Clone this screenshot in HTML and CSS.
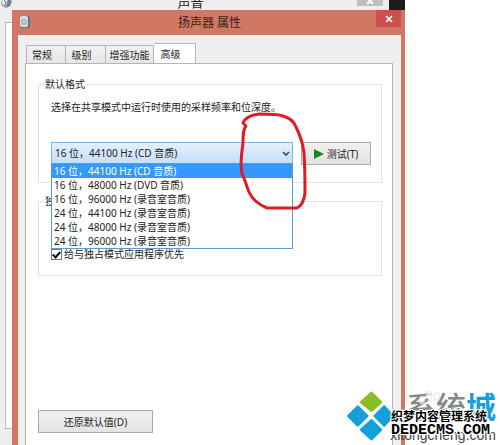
FILE: index.html
```html
<!DOCTYPE html>
<html lang="zh-CN">
<head>
    <meta charset="UTF-8">
    <meta name="viewport" content="width=device-width, initial-scale=1.0">
    <title>扬声器 属性</title>
    <link rel="stylesheet" href="styles.css">
</head>
<body>
    <div class="desktop">
        <div class="parent-window">
            <svg class="parent-icon" viewBox="0 0 14 14" aria-hidden="true">
                <circle cx="6" cy="5" r="5" fill="#a9b1b8"/>
                <circle cx="5" cy="4" r="3" fill="#dce3e8"/>
                <path d="M8 1l4 2-2 5-4 1z" fill="#6f7f8c"/>
                <path d="M3 1l3 3-1 3" fill="none" stroke="#75808a"/>
            </svg>
            <span class="parent-title">声音</span>
            <button class="parent-close" type="button" aria-label="关闭声音">
                <svg viewBox="0 0 8 8"><path d="M1 1l6 6M7 1l-6 6" stroke="#fff" stroke-width="2"/></svg>
            </button>
            <div class="parent-page"></div>
        </div>

        <form class="dialog">
            <header class="title-bar">
                <svg class="dialog-icon" viewBox="0 0 12 12" aria-hidden="true">
                    <rect x="1" y="0" width="10" height="12" rx="2" fill="#617481"/>
                    <rect x="1" y="0" width="8" height="11" rx="2" fill="#d3dde4"/>
                    <circle cx="5" cy="6" r="3" fill="#a3b6c4"/>
                    <circle cx="5" cy="6" r="1" fill="#dfeaf1"/>
                </svg>
                <h1>扬声器 属性</h1>
                <button class="close" type="button" aria-label="关闭">
                    <svg viewBox="0 0 8 8"><path d="M1 1l6 6M7 1l-6 6" stroke="#fff" stroke-width="1.6"/></svg>
                </button>
            </header>

            <div class="client">
                <nav class="tabs" role="tablist">
                    <button type="button" role="tab">常规</button>
                    <button type="button" role="tab">级别</button>
                    <button type="button" role="tab" class="wide">增强功能</button>
                    <button type="button" role="tab" class="active" aria-selected="true">高级</button>
                </nav>
                <div class="page">
                    <fieldset class="format">
                        <legend>默认格式</legend>
                        <label for="format">选择在共享模式中运行时使用的采样频率和位深度。</label>
                        <div class="format-row">
                            <div class="combo">
                                <select id="format">
                                    <option>16 位，44100 Hz (CD 音质)</option>
                                    <option>16 位，48000 Hz (DVD 音质)</option>
                                    <option>16 位，96000 Hz (录音室音质)</option>
                                    <option>24 位，44100 Hz (录音室音质)</option>
                                    <option>24 位，48000 Hz (录音室音质)</option>
                                    <option>24 位，96000 Hz (录音室音质)</option>
                                </select>
                                <svg class="arrow" viewBox="0 0 8 6" aria-hidden="true"><path d="M1 1l3 3 3-3" fill="none" stroke="#444" stroke-width="1.6"/></svg>
                                <ul class="options" role="listbox">
                                    <li role="option" aria-selected="true">16 位，44100 Hz (CD 音质)</li>
                                    <li role="option">16 位，48000 Hz (DVD 音质)</li>
                                    <li role="option">16 位，96000 Hz (录音室音质)</li>
                                    <li role="option">24 位，44100 Hz (录音室音质)</li>
                                    <li role="option">24 位，48000 Hz (录音室音质)</li>
                                    <li role="option">24 位，96000 Hz (录音室音质)</li>
                                </ul>
                                <svg class="scribble" viewBox="0 0 66 100" aria-hidden="true">
                                    <path d="M6 14L3 11C5 6 11 3 19 2C29 2 38 2 43 4C50 6 54 9 56 15C60 23 63 32 64 41C65 55 65 70 65 81C64 89 61 94 57 96L27 96C20 93 12 87 9 80C6 73 5 67 2 62C0 53 1 44 3 31C3 23 3 17 6 14"/>
                                </svg>
                            </div>
                            <button class="push" type="button">
                                <svg class="play" viewBox="0 0 10 10" aria-hidden="true"><path d="M0 0l10 5-10 5z" fill="#158a1d"/></svg>
                                测试(T)
                            </button>
                        </div>
                    </fieldset>

                    <fieldset class="exclusive">
                        <legend>独占模式</legend>
                        <div class="check">
                            <input type="checkbox" id="priority" checked>
                            <label for="priority">给与独占模式应用程序优先</label>
                        </div>
                    </fieldset>

                    <button class="push restore" type="button">还原默认值(D)</button>
                </div>
            </div>
        </form>

        <div class="watermark">
            <svg class="logo" viewBox="0 0 48 50" aria-hidden="true">
                <g stroke-linejoin="round" stroke-width="2">
                    <path d="M25 1L35 11 25 20 14 11z" fill="#85bf24" stroke="#85bf24"/>
                    <path d="M11 15L21 25 11 35 1 25z" fill="#13a0db" stroke="#13a0db"/>
                    <path d="M38 15L47 25 38 35 28 25z" fill="#13a0db" stroke="#13a0db"/>
                    <path d="M25 29L35 39 25 49 14 39z" fill="#13a0db" stroke="#13a0db"/>
                </g>
            </svg>
            <span class="brand">系统<b>城</b></span>
            <svg class="paw" viewBox="0 0 30 28" aria-hidden="true">
                <g fill="#fff" stroke="#ddd" opacity="0.7">
                    <ellipse cx="5" cy="10" rx="3" ry="4"/>
                    <ellipse cx="12" cy="5" rx="3" ry="4"/>
                    <ellipse cx="20" cy="6" rx="3" ry="4"/>
                </g>
            </svg>
            <span class="site">xitongcheng.com</span>
            <span class="cms">织梦内容管理系统</span>
            <span class="cms-site">DEDECMS.COM</span>
        </div>
    </div>
</body>
</html>
```
FILE: styles.css
```css
* {
    box-sizing: border-box;
}
body {
    margin: 0;
    background-color: #fff;
    color: #222;
    font: 10px/14px "Noto Sans", "Noto Sans CJK SC", sans-serif;
}
button,
select {
    font: inherit;
    color: inherit;
    padding: 0;
    margin: 0;
}
svg {
    display: block;
}

/* windows */
.desktop {
    position: relative;
    display: flex;
    min-height: 100vh;
    overflow: hidden;
}
.parent-window {
    position: absolute;
    inset: 0 95px 0 0;
    background: #eee;
    border-right: 16px solid #1d1b1c;
}
.parent-icon {
    position: absolute;
    left: 0;
    top: -2px;
    width: 14px;
    height: 14px;
}
.parent-title {
    position: absolute;
    top: -6px;
    left: 0;
    right: 8px;
    text-align: center;
    font-size: 13px;
    line-height: 16px;
}
.parent-close {
    position: absolute;
    top: -8px;
    right: 6px;
    width: 26px;
    height: 14px;
    border: 0;
    background: #bfbfbf;
}
.parent-close svg {
    width: 8px;
    height: 8px;
    margin: 4px auto 0;
}
.parent-page {
    position: absolute;
    inset: 22px 0 16px 5px;
    background: #fff;
    border: 1px solid #bbb;
}
.dialog {
    position: relative;
    flex: 1;
    display: flex;
    flex-direction: column;
    margin: 10px 95px 0 12px;
    padding: 0 4px 0 6px;
    background: #d07864;
}
.title-bar {
    display: flex;
    height: 25px;
}
.dialog-icon {
    width: 12px;
    height: 12px;
    margin: 6px 0 0 1px;
}
h1 {
    flex: 1;
    margin: 0;
    padding-left: 12px;
    text-align: center;
    font-size: 12px;
    line-height: 25px;
    font-weight: normal;
    color: #3a211c;
}
.close {
    width: 25px;
    height: 17px;
    border: 0;
    background: #c9504f;
}
.close svg {
    width: 8px;
    height: 8px;
    margin: 0 auto;
}
.client {
    flex: 1;
    display: flex;
    flex-direction: column;
    padding: 7px 8px 0 7px;
    background: #efefef;
    border-top: 1px solid #f8e4de;
}

/* tabs */
.tabs {
    display: flex;
    align-items: flex-end;
    padding-left: 1px;
}
.tabs button {
    width: 40px;
    height: 18px;
    padding-right: 8px;
    border: 1px solid #b5b5b5;
    border-width: 1px 1px 0 0;
    background: linear-gradient(#f2f2f2, #e6e6e6);
}
.tabs button:first-child {
    border-left-width: 1px;
}
.tabs .wide {
    width: 48px;
    padding: 0;
}
.tabs .active {
    width: 42px;
    height: 21px;
    margin-bottom: -1px;
    background: #fff;
}
.page {
    flex: 1;
    padding: 13px 10px 12px 12px;
    background: #fff;
    border: 1px solid #b5b5b5;
    border-bottom: 0;
}

/* groups */
fieldset {
    min-width: 0;
    margin: 0;
    padding: 0 10px 0 12px;
    border: 1px solid #e2e2e2;
}
legend {
    margin-left: -7px;
    padding: 0 1px;
}
.format {
    height: 106px;
}
.format label {
    display: block;
    margin-top: 9px;
}
.format-row {
    display: flex;
    gap: 8px;
    margin-top: 28px;
}
.combo {
    position: relative;
    flex: 1;
}
.combo select {
    display: block;
    width: 100%;
    height: 22px;
    padding: 0 3px;
    appearance: none;
    border: 1px solid #7eb4e2;
    border-radius: 0;
    background: linear-gradient(#e4f0fc, #c4dff8);
}
.arrow {
    position: absolute;
    top: 9px;
    right: 3px;
    width: 8px;
    height: 6px;
}
.options {
    position: absolute;
    top: 21px;
    left: 0;
    right: 0;
    margin: 0;
    padding: 0;
    list-style: none;
    background: #fff;
    border: 1px solid #5b9bd5;
}
.options li {
    padding-left: 2px;
    line-height: 14px;
}
.options [aria-selected="true"] {
    color: #fff;
    background: #3399ff;
}
.scribble {
    position: absolute;
    top: -30px;
    right: -13px;
    width: 66px;
    height: 100px;
    overflow: visible;
}
.scribble path {
    fill: none;
    stroke: #e01b24;
    stroke-width: 3;
    stroke-linecap: round;
    stroke-linejoin: round;
}
.push {
    display: flex;
    align-items: center;
    justify-content: center;
    gap: 3px;
    width: 70px;
    height: 23px;
    border: 1px solid #aaa;
    background: linear-gradient(#f0f0f0, #e4e4e4);
}
.play {
    width: 10px;
    height: 10px;
}
.exclusive {
    height: 82px;
    margin-top: 11px;
}
.check {
    display: flex;
    align-items: center;
    gap: 2px;
    margin-top: 39px;
}
.check input {
    appearance: none;
    width: 11px;
    height: 11px;
    margin: 0;
    border: 1px solid #777;
    background: #fff;
}
.check input:checked::before {
    content: "";
    display: block;
    width: 3px;
    height: 6px;
    margin: 0 auto;
    border: solid #111;
    border-width: 0 2px 2px 0;
    transform: rotate(42deg);
}
.restore {
    width: 115px;
    margin-top: 134px;
}

/* watermark over the windows */
.watermark {
    position: absolute;
    right: 4px;
    bottom: 3px;
    width: 149px;
    height: 52px;
    white-space: nowrap;
}
.watermark > * {
    position: absolute;
}
.logo {
    left: 0;
    top: 1px;
    width: 47px;
    height: 50px;
}
.paw {
    left: 70px;
    top: 0;
    width: 30px;
    height: 28px;
}
.brand {
    right: 0;
    top: 1px;
    font-size: 30px;
    line-height: 32px;
    font-weight: 500;
    color: #85898c;
}
.brand b {
    color: #13a0db;
}
.site {
    right: 0;
    bottom: -1px;
    font: 14px/16px "Liberation Sans", Arial, sans-serif;
    color: #444;
}
.cms,
.cms-site {
    left: 44px;
    color: #000;
    text-shadow: 1px 0 #fff, -1px 0 #fff, 0 1px #fff, 0 -1px #fff, 1px 1px #fff, -1px -1px #fff, 1px -1px #fff, -1px 1px #fff;
}
.cms {
    top: 20px;
    font-size: 12px;
    line-height: 14px;
    font-weight: bold;
}
.cms-site {
    top: 34px;
    font: bold 15px/14px "Liberation Mono", "Courier New", monospace;
}
```
